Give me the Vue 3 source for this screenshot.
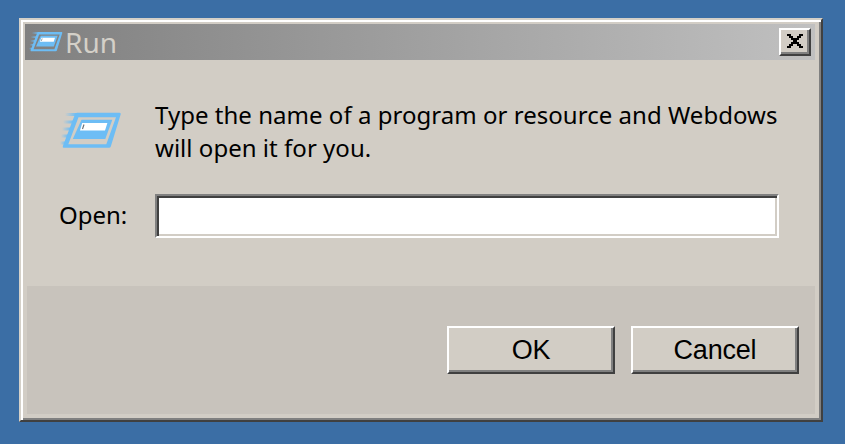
<script setup>
import { ref } from 'vue'

const command = ref('')
const streaks = [
  { x: 5, y: 3.5 }, { x: 3, y: 11 }, { x: 2, y: 18 }, { x: 1, y: 25 }, { x: 0, y: 32 },
]
</script>

<template>
  <main class="desktop">
    <svg class="defs" aria-hidden="true">
      <defs>
        <linearGradient id="streak" x1="0" x2="1">
          <stop offset="0" stop-color="#6dbdf5" stop-opacity="0" />
          <stop offset="1" stop-color="#6dbdf5" />
        </linearGradient>
      </defs>
      <symbol id="run-icon" viewBox="0 0 62 38">
        <rect v-for="s in streaks" :key="s.y" :x="s.x" :y="s.y - 1.5" :width="17.5 - s.x - s.y * 0.37" height="3" fill="url(#streak)" />
        <path d="M17 1.7H59.5Q61.2 1.7 60.7 3.3L50.8 35.4Q50.4 36.7 49 36.7H4Q2.3 36.7 2.8 35.2L15 3.2Q15.6 1.7 17 1.7ZM18.5 6.3L8.3 33.3H46.3L56 6.3Z" fill="#6dbdf5" fill-rule="evenodd" />
        <path d="M21.5 8.7H52.3L45.3 28H12.8Z" fill="#6dbdf5" />
        <path d="M22.2 12H47.4L45 19.6H20Z" fill="#fff" />
        <path d="M24 13.5L22.5 18" stroke="#626970" stroke-width="1.1" />
      </symbol>
    </svg>
    <section class="window">
      <header class="titlebar">
        <svg class="small-icon"><use href="#run-icon" /></svg>
        <h1>Run</h1>
        <button class="button close" aria-label="Close">
          <svg width="16" height="14" viewBox="0 0 8 7" shape-rendering="crispEdges">
            <path d="M0 0h2v1h1v1h2V1h1V0h2v1H7v1H6v1H5v1h1v1h1v1h1v1H6V6H5V5H3v1H2v1H0V6h1V5h1V4h1V3H2V2H1V1H0Z" />
          </svg>
        </button>
      </header>
      <div class="content">
        <svg class="large-icon"><use href="#run-icon" /></svg>
        <p>Type the name of a program or resource and Webdows will open it for you.</p>
        <label for="command">Open:</label>
        <input id="command" v-model="command" type="text" />
      </div>
      <footer>
        <button class="button action">OK</button>
        <button class="button action">Cancel</button>
      </footer>
    </section>
  </main>
</template>

<style>
body { margin: 0; background: #3b6ea5; }
</style>

<style scoped>
* { box-sizing: border-box; }
.desktop {
  height: 444px;
  padding: 18px 22px 22px 19px;
  background: #3b6ea5;
  font-family: "Noto Sans", sans-serif;
  overflow: hidden;
}
.defs { position: absolute; width: 0; height: 0; }
.window {
  height: 404px;
  border: 2px solid;
  border-color: #d4d0c8 #404040 #404040 #d4d0c8;
  box-shadow: inset 2px 2px #fff, inset -2px -2px #808080;
  background: #d2cdc5;
  padding: 4px 6px 6px 4px;
  display: flex;
  flex-direction: column;
}
.titlebar {
  flex: 0 0 36px;
  display: flex;
  align-items: center;
  padding: 0 4px;
  background: linear-gradient(90deg, #808080, #c0c0c0);
}
.small-icon { width: 34px; height: 21px; margin-top: -1px; }
h1 {
  margin: 0 auto 0 2px;
  font-size: 28px;
  line-height: 36px;
  font-weight: 400;
  color: #d4d0c8;
}
.button {
  border: 2px solid;
  border-color: #fff #404040 #404040 #fff;
  box-shadow: inset -2px -2px #808080;
  background: #d2cdc5;
  color: #000;
  padding: 0;
}
.close {
  width: 32px;
  height: 28px;
  padding: 4px 6px 6px;
}
.close svg { display: block; }
.content {
  flex: 0 0 226px;
  display: grid;
  grid-template-columns: 96px 624px;
  grid-template-rows: 66px 44px;
  row-gap: 30px;
  padding: 38px 0 0 34px;
  font-size: 24px;
  line-height: 33px;
  color: #000;
}
.large-icon { width: 62px; height: 38px; margin: 13px 0 0 1px; }
p { margin: 0; letter-spacing: 0.03px; }
label { padding-top: 4px; }
input {
  width: 624px;
  height: 44px;
  margin: 0;
  border: 2px solid;
  border-color: #808080 #fff #fff #808080;
  border-radius: 0;
  box-shadow: inset 2px 2px #404040, inset -2px -2px #d2cdc5;
  background: #fff;
  padding: 0 8px;
  font: inherit;
  outline: 0;
}
footer {
  flex: 0 0 128px;
  margin-left: 2px;
  padding: 0 16px;
  display: flex;
  align-items: center;
  justify-content: flex-end;
  gap: 16px;
  background: #c8c3bc;
}
.action {
  width: 168px;
  height: 48px;
  font: 27px "Liberation Sans", Arial, sans-serif;
  letter-spacing: -0.2px;
}
</style>
